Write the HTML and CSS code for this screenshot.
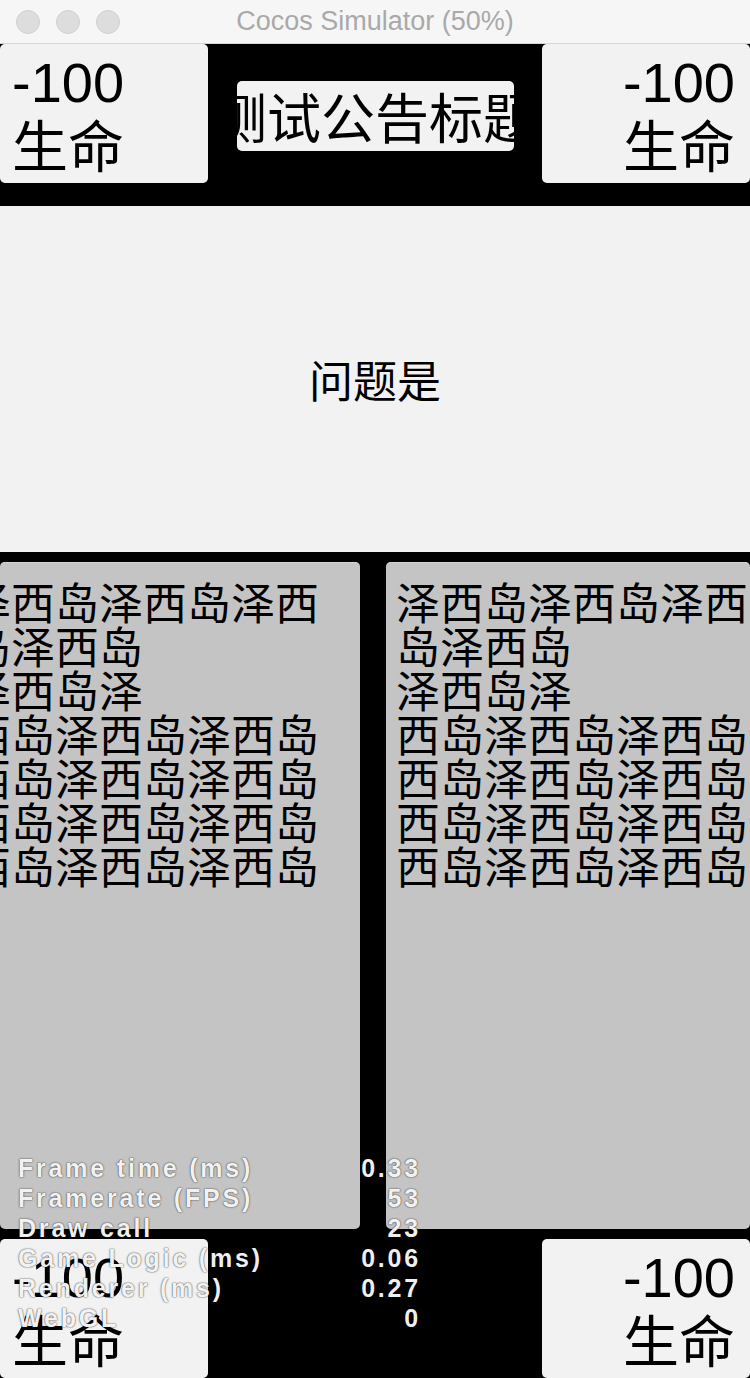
FILE: index.html
```html
<!DOCTYPE html>
<html lang="zh">
<head>
<meta charset="utf-8">
<title>Cocos Simulator (50%)</title>
<link rel="stylesheet" href="styles.css">
</head>
<body>
<div class="window">
  <header class="titlebar">
    <div class="lights"><span class="light"></span><span class="light"></span><span class="light"></span></div>
    <div class="title">Cocos Simulator (50%)</div>
    <div class="spacer"></div>
  </header>
  <main class="stage">
    <section class="row">
      <div class="card card-left"><div class="num">-100</div><div class="cjk">生命</div></div>
      <div class="notice"><span>测试公告标题</span></div>
      <div class="card card-right"><div class="num">-100</div><div class="cjk">生命</div></div>
    </section>
    <section class="question"><span>问题是</span></section>
    <section class="panels">
      <div class="panel panel-left">
        <div class="lines">
          <div>泽西岛泽西岛泽西</div>
          <div>岛泽西岛</div>
          <div>泽西岛泽</div>
          <div>西岛泽西岛泽西岛</div>
          <div>西岛泽西岛泽西岛</div>
          <div>西岛泽西岛泽西岛</div>
          <div>西岛泽西岛泽西岛</div>
        </div>
      </div>
      <div class="panel panel-right">
        <div class="lines">
          <div>泽西岛泽西岛泽西</div>
          <div>岛泽西岛</div>
          <div>泽西岛泽</div>
          <div>西岛泽西岛泽西岛</div>
          <div>西岛泽西岛泽西岛</div>
          <div>西岛泽西岛泽西岛</div>
          <div>西岛泽西岛泽西岛</div>
        </div>
      </div>
    </section>
    <section class="row row-bottom">
      <div class="card card-left"><div class="num">-100</div><div class="cjk">生命</div></div>
      <div class="card card-right"><div class="num">-100</div><div class="cjk">生命</div></div>
    </section>
    <div class="stats">
      <span class="label">Frame time (ms)</span><span class="value">0.33</span>
      <span class="label">Framerate (FPS)</span><span class="value">53</span>
      <span class="label">Draw call</span><span class="value">23</span>
      <span class="label">Game Logic (ms)</span><span class="value">0.06</span>
      <span class="label">Renderer (ms)</span><span class="value">0.27</span>
      <span class="label">WebGL</span><span class="value">0</span>
    </div>
  </main>
</div>
</body>
</html>
```

FILE: styles.css
```css
* { box-sizing: border-box; }

html, body {
  margin: 0;
  padding: 0;
  background: #000;
}

body {
  width: 750px;
  height: 1378px;
  overflow: hidden;
  font-family: "Liberation Sans", "Noto Sans CJK SC", sans-serif;
}

.window {
  width: 750px;
  height: 1378px;
  display: flex;
  flex-direction: column;
}

.titlebar {
  height: 44px;
  flex: none;
  background: #f6f6f6;
  border-bottom: 1px solid #d6d6d6;
  display: grid;
  grid-template-columns: 1fr auto 1fr;
  align-items: center;
}

.lights {
  display: flex;
  gap: 16px;
  padding-left: 16px;
}

.light {
  width: 24px;
  height: 24px;
  border-radius: 50%;
  background: #dddddd;
  border: 1px solid #d0d0d0;
}

.title {
  font-family: "Liberation Sans", sans-serif;
  font-size: 27px;
  color: #a9a9a9;
  line-height: 1;
}

.stage {
  position: relative;
  flex: 1;
  background: #000;
  display: flex;
  flex-direction: column;
}

.row {
  height: 162px;
  flex: none;
  display: flex;
  justify-content: space-between;
  align-items: flex-start;
}

.row-bottom {
  height: 139px;
  margin-top: 10px;
}

.card {
  width: 208px;
  height: 139px;
  background: #f2f2f2;
  border-radius: 5px;
  padding-top: 10px;
  color: #000;
  font-size: 56px;
  display: flex;
  flex-direction: column;
}

.card-left { padding-left: 12px; align-items: flex-start; }
.card-right { padding-right: 15px; align-items: flex-end; }

.card .num {
  font-family: "Liberation Sans", sans-serif;
  line-height: 58px;
  height: 58px;
}

.card .cjk {
  font-family: "Noto Sans CJK SC", sans-serif;
  line-height: 62px;
  height: 62px;
}

.notice {
  margin-top: 37px;
  width: 277px;
  height: 70px;
  background: #f2f2f2;
  border-radius: 5px;
  overflow: hidden;
  display: flex;
  justify-content: center;
  align-items: center;
}

.notice span {
  flex: none;
  white-space: nowrap;
  font-family: "Noto Sans CJK SC", sans-serif;
  font-size: 54px;
  line-height: 1;
  color: #000;
}

.question {
  height: 346px;
  flex: none;
  background: #f2f2f2;
  display: flex;
  justify-content: center;
  align-items: center;
}

.question span {
  font-family: "Noto Sans CJK SC", sans-serif;
  font-size: 44px;
  line-height: 1;
  color: #000;
}

.panels {
  height: 667px;
  flex: none;
  margin-top: 10px;
  display: flex;
  gap: 26px;
}

.panel {
  background: #c4c4c4;
  border-radius: 5px;
  box-shadow: inset 0 1px 0 #d2d2d2;
  overflow: hidden;
  padding-top: 17px;
}

.panel-left { width: 360px; }
.panel-right { flex: 1; padding-left: 10px; }

.panel-left .lines { margin-left: -33px; }

.lines {
  font-family: "Noto Sans CJK SC", sans-serif;
  font-size: 44px;
  line-height: 44px;
  color: #000;
  white-space: nowrap;
}

.stats {
  position: absolute;
  left: 18px;
  top: 1109px;
  width: 403px;
  display: grid;
  grid-template-columns: 1fr auto;
  font-family: "Liberation Sans", sans-serif;
  font-weight: bold;
  font-size: 25px;
  line-height: 30px;
  letter-spacing: 2.8px;
  color: rgba(255, 255, 255, 0.95);
  text-shadow: 0 0 2px rgba(0, 0, 0, 0.6), 0 0 1px rgba(0, 0, 0, 0.5);
}

.stats .value { text-align: right; }
```
